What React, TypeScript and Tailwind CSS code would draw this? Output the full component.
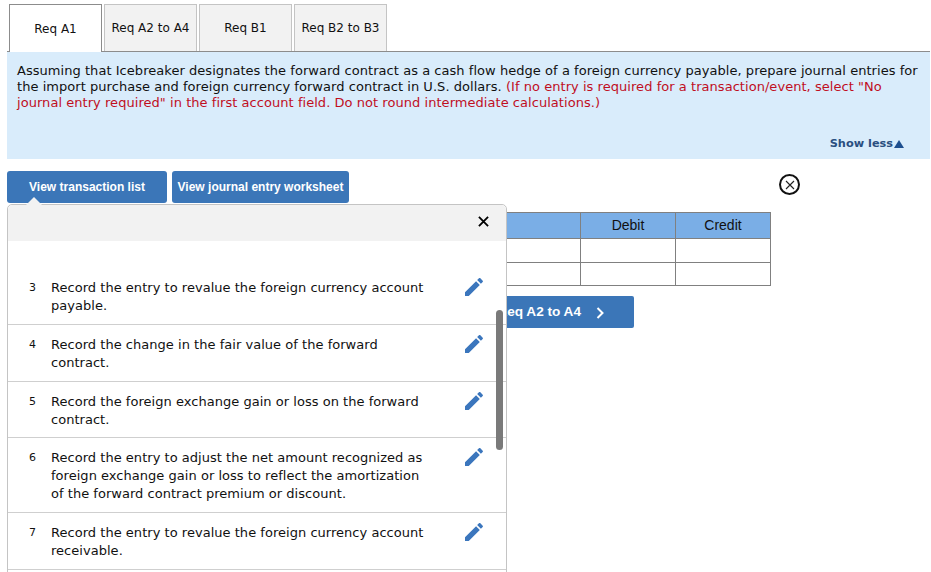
import React from "react";

const tabs = ["Req A1", "Req A2 to A4", "Req B1", "Req B2 to B3"];

const entries = [
  { n: 3, text: "Record the entry to revalue the foreign currency account payable." },
  { n: 4, text: "Record the change in the fair value of the forward contract." },
  { n: 5, text: "Record the foreign exchange gain or loss on the forward contract." },
  { n: 6, text: "Record the entry to adjust the net amount recognized as foreign exchange gain or loss to reflect the amortization of the forward contract premium or discount." },
  { n: 7, text: "Record the entry to revalue the foreign currency account receivable." },
];

function EditIcon() {
  return (
    <svg viewBox="0 0 24 24" className="h-6 w-6 fill-[#3b76bd]">
      <path d="M3 17.25V21h3.75L17.81 9.94l-3.75-3.75L3 17.25zM20.71 7.04c.39-.39.39-1.02 0-1.41l-2.34-2.34c-.39-.39-1.02-.39-1.41 0l-1.83 1.83 3.75 3.75 1.83-1.83z" />
    </svg>
  );
}

export default function App() {
  return (
    <div className="relative h-[572px] w-[931px] overflow-hidden bg-white font-['DejaVu_Sans',sans-serif] text-[13px] text-[#111]">
      {/* tabs */}
      <div className="ml-[7px] flex h-[52px] w-[923px] gap-[2px] border-b border-[#8c8c8c] pl-[2px] pt-[4px]">
        {tabs.map((t, i) => (
          <div
            key={t}
            className={
              i === 0
                ? "z-10 flex h-[48px] w-[93px] items-center justify-center border border-b-0 border-[#8c8c8c] bg-white text-[12px]"
                : "flex h-[47px] w-[93px] items-center justify-center border border-b-0 border-[#c4c4c4] bg-[#f2f2f2] text-[12px]"
            }
          >
            {t}
          </div>
        ))}
      </div>

      {/* question */}
      <div className="ml-[7px] flex h-[107px] w-[923px] flex-col bg-[#d9ecfb] pl-[10px] pr-[10px] pt-[11px] leading-4">
        <p className="tracking-[0.045px]">
          Assuming that Icebreaker designates the forward contract as a cash flow hedge of a foreign currency payable, prepare journal entries for the import purchase and foreign currency forward contract in U.S. dollars.{" "}
          <span className="text-[#c00f1f]">(If no entry is required for a transaction/event, select "No journal entry required" in the first account field. Do not round intermediate calculations.)</span>
        </p>
        <div className="mb-[7px] mt-auto flex items-center justify-end gap-[1px] pr-[16px] text-[11.3px] font-bold text-[#2a4f80]">
          Show less
          <svg viewBox="0 0 10 8" className="h-[8px] w-[10px] fill-[#1d4f8f]"><path d="M5 0l5 8H0z" /></svg>
        </div>
      </div>

      {/* buttons */}
      <div className="ml-[7px] mt-[12px] flex h-8 gap-[5px] font-['Liberation_Sans',sans-serif] text-[12px] font-bold text-white">
        <button className="h-8 w-[160px] rounded-[3px] bg-[#3b76b8]">View transaction list</button>
        <button className="h-8 w-[177px] rounded-[3px] bg-[#3b76b8]">View journal entry worksheet</button>
        <button className="ml-[425px] mt-[3px] flex h-[21px] w-[21px] items-center justify-center rounded-full border-2 border-[#111] bg-white">
          <svg viewBox="0 0 10 10" className="h-[10px] w-[10px] stroke-[#222]"><path d="M1 1l8 8M9 1l-8 8" strokeWidth="1.1" /></svg>
        </button>
      </div>

      {/* table behind the popover */}
      <div className="ml-[17px] mt-[9px] w-[754px] font-['Liberation_Sans',sans-serif] text-[14px]">
        <table className="w-full table-fixed border-collapse border border-[#808080]">
          <colgroup>
            <col />
            <col className="w-[95px]" />
            <col className="w-[95px]" />
          </colgroup>
          <thead>
            <tr className="h-[26px] bg-[#7aaee6]">
              <th className="border border-[#808080]" />
              <th className="border border-[#808080] font-normal">Debit</th>
              <th className="border border-[#808080] font-normal">Credit</th>
            </tr>
          </thead>
          <tbody>
            <tr className="h-[24px]">
              <td className="border border-[#808080]" />
              <td className="border border-[#808080]" />
              <td className="border border-[#808080]" />
            </tr>
            <tr className="h-[23px]">
              <td className="border border-[#808080]" />
              <td className="border border-[#808080]" />
              <td className="border border-[#808080]" />
            </tr>
          </tbody>
        </table>
        <div className="mt-[10px] flex justify-end pr-[137px]">
          <button className="flex h-8 w-[157px] items-center justify-end gap-[15px] rounded-[2px] bg-[#3b76b8] pb-[-1px] pr-[30px] pt-[1px] text-[13.6px] font-bold text-white">
            Req A2 to A4
            <svg viewBox="0 0 8 12" className="h-3 w-2 fill-none stroke-white stroke-2"><path d="M1.5 1l5 5-5 5" /></svg>
          </button>
        </div>
      </div>

      {/* transaction list popover */}
      <div className="absolute left-[7px] top-[204px] z-20 h-[380px] w-[500px] rounded-t-[5px] border border-[#c4c4c4] bg-white">
        <div className="absolute -top-[8px] left-[18px] h-0 w-0 border-x-[8px] border-b-[8px] border-x-transparent border-b-[#f2f2f2]" />
        <div className="flex h-[36px] items-start justify-end rounded-t-[5px] bg-[#f2f2f2] pr-[17px] pt-[11px]">
          <svg viewBox="0 0 12 12" className="h-[11px] w-[11px] stroke-black"><path d="M1 1l10 10M11 1L1 11" strokeWidth="2" /></svg>
        </div>
        <div className="pt-[27.3px]">
          {entries.map((e) => (
            <div key={e.n} className="flex border-b border-[#cfcfcf] pb-[8.7px] pt-[11px] leading-[18px]">
              <span className="w-[43px] shrink-0 pl-[21px] text-[11px]">{e.n}</span>
              <p className="w-[376px] tracking-[0.03px]">{e.text}</p>
              <span className="-mt-[4px] ml-[35px]"><EditIcon /></span>
            </div>
          ))}
        </div>
        <div className="absolute left-[488px] top-[105px] h-[140px] w-[7px] rounded-full bg-[#7a7a7a]" />
      </div>
    </div>
  );
}
